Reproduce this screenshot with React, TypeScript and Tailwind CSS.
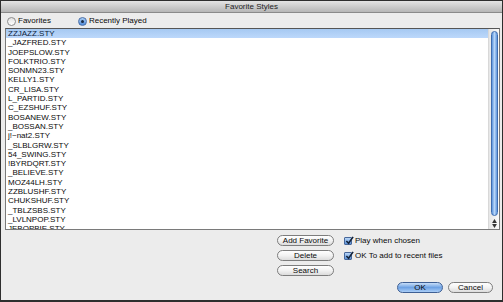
import React from "react";

const styles = [
  "ZZJAZZ.STY",
  "_JAZFRED.STY",
  "JOEPSLOW.STY",
  "FOLKTRIO.STY",
  "SONMN23.STY",
  "KELLY1.STY",
  "CR_LISA.STY",
  "L_PARTID.STY",
  "C_EZSHUF.STY",
  "BOSANEW.STY",
  "_BOSSAN.STY",
  "j!~nat2.STY",
  "_SLBLGRW.STY",
  "54_SWING.STY",
  "!BYRDQRT.STY",
  "_BELIEVE.STY",
  "MOZ44LH.STY",
  "ZZBLUSHF.STY",
  "CHUKSHUF.STY",
  "_TBLZSBS.STY",
  "_LVLNPOP.STY",
  "JEBOPBIE.STY",
];

const Radio = ({ checked, label }: { checked?: boolean; label: string }) => (
  <div className="flex items-center gap-[2px]">
    {checked ? (
      <div className="w-[9px] h-[9px] rounded-full border border-[#4a6fa8] bg-gradient-to-b from-[#a9cdf4] to-[#4f8ad8] flex items-center justify-center">
        <div className="w-[3px] h-[3px] rounded-full bg-[#1b2b44]" />
      </div>
    ) : (
      <div className="w-[9px] h-[9px] rounded-full border border-[#8c8c8c] bg-gradient-to-b from-[#e2e2e2] to-[#ffffff]" />
    )}
    <span>{label}</span>
  </div>
);

const PillButton = ({ label, w }: { label: string; w: string }) => (
  <div
    className={`${w} h-[11px] rounded-full border border-[#7d7d7d] bg-gradient-to-b from-[#ffffff] via-[#f2f2f2] to-[#dcdcdc] flex items-center justify-center leading-none`}
  >
    {label}
  </div>
);

const Check = ({ label }: { label: string }) => (
  <div className="flex items-center gap-[3px] h-[11px]">
    <div className="relative w-[8px] h-[8px] rounded-[1px] border border-[#47679a] bg-gradient-to-b from-[#b9d6f7] to-[#5a91d9]">
      <svg viewBox="0 0 10 10" className="absolute left-[0px] top-[-2px] w-[9px] h-[9px]">
        <path d="M1.5 5.5 L4 8 L9 1" fill="none" stroke="#14233a" strokeWidth="1.8" />
      </svg>
    </div>
    <span className="leading-none">{label}</span>
  </div>
);

export default function App() {
  return (
    <div
      className="w-[503px] h-[302px] flex flex-col bg-[#ececec] border border-[#2e2e2e] border-b-2 text-[8px] text-[#0a0a0a]"
      style={{ fontFamily: '"Liberation Sans", Arial, sans-serif' }}
    >
      {/* title bar */}
      <div className="h-[12px] shrink-0 bg-gradient-to-b from-[#e4e4e4] to-[#b6b6b6] border-b border-[#8a8a8a] flex items-center justify-center leading-none text-[#222]">
        Favorite Styles
      </div>

      {/* source choice */}
      <div className="h-[15px] shrink-0 flex items-center pl-[6px] gap-[27px] pt-[1px]">
        <Radio label="Favorites" />
        <Radio checked label="Recently Played" />
      </div>

      {/* style list */}
      <div className="mx-[4px] mr-[2px] h-[202px] shrink-0 flex bg-white border border-[#7a7a7a] border-t-[#555]">
        <div className="flex-1 overflow-hidden">
          {styles.map((s, i) => (
            <div
              key={s}
              className={`h-[9.3px] leading-[9.3px] pl-[2px] ${
                i === 0 ? "bg-gradient-to-b from-[#a6c9f2] to-[#bcd8fb] text-[#0b1c3a]" : ""
              }`}
            >
              {s}
            </div>
          ))}
        </div>
        <div className="w-[11px] flex flex-col items-center bg-gradient-to-r from-[#e6e6e6] to-[#fafafa] border-l border-[#d8d8d8]">
          <div className="mt-[2px] w-[7px] h-[185px] rounded-full border border-[#3d6cb0] bg-gradient-to-r from-[#5d95dc] via-[#b7d5f8] to-[#5d95dc]" />
          <div className="mt-auto mb-[1px] flex flex-col items-center gap-[1px]">
            <svg viewBox="0 0 6 5" className="w-[5px] h-[4px]">
              <path d="M3 0 L6 5 L0 5 Z" fill="#333" />
            </svg>
            <svg viewBox="0 0 6 5" className="w-[5px] h-[4px]">
              <path d="M0 0 L6 0 L3 5 Z" fill="#333" />
            </svg>
          </div>
        </div>
      </div>

      {/* actions */}
      <div className="flex flex-col pt-[5px]">
        <div className="flex pl-[276px] gap-[10px]">
          <div className="flex flex-col gap-[4px]">
            <PillButton label="Add Favorite" w="w-[57px]" />
            <PillButton label="Delete" w="w-[57px]" />
            <PillButton label="Search" w="w-[57px]" />
          </div>
          <div className="flex flex-col gap-[4px]">
            <Check label="Play when chosen" />
            <Check label="OK To add to recent files" />
          </div>
        </div>
        <div className="flex justify-end gap-[5px] pr-[9px] mt-[6px]">
          <div className="w-[46px] h-[11px] rounded-full border border-[#3e5f94] bg-gradient-to-b from-[#c8def8] via-[#6ea2e4] to-[#a9cdf6] flex items-center justify-center leading-none">
            OK
          </div>
          <PillButton label="Cancel" w="w-[45px]" />
        </div>
      </div>
    </div>
  );
}
